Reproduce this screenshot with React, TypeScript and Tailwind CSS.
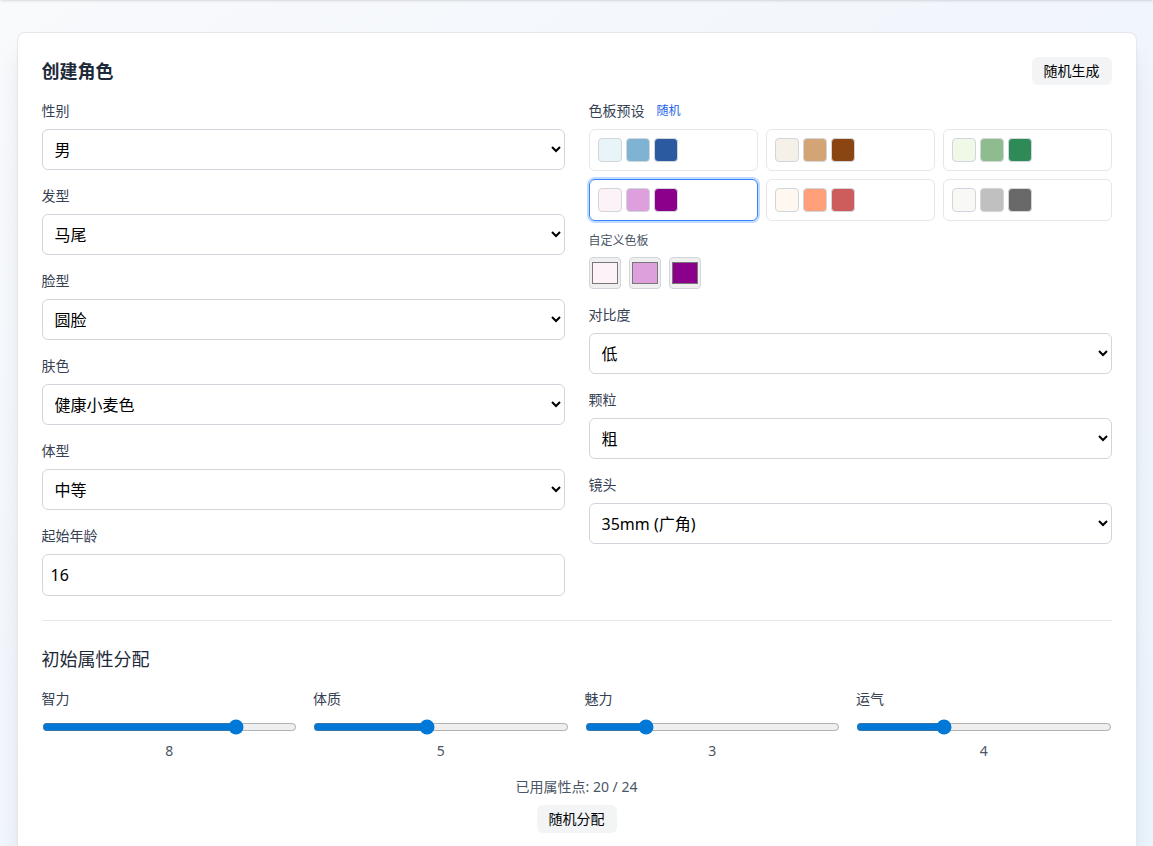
import { useState } from "react";

const presets = [
  ["#e8f4f8", "#7fb3d3", "#2c5aa0"],
  ["#f5f1e8", "#d4a574", "#8b4513"],
  ["#f0f8e8", "#8fbc8f", "#2e8b57"],
  ["#fdf2f8", "#dda0dd", "#8b008b"],
  ["#fff8f0", "#ffa07a", "#cd5c5c"],
  ["#f8f8f5", "#c0c0c0", "#696969"],
];

const looks = [
  { id: "gender", label: "性别", options: ["男", "女"] },
  { id: "hair", label: "发型", options: ["马尾", "短发", "长发"] },
  { id: "face", label: "脸型", options: ["圆脸", "方脸", "瓜子脸"] },
  { id: "skin", label: "肤色", options: ["健康小麦色", "白皙", "深色"] },
  { id: "body", label: "体型", options: ["中等", "纤细", "健壮"] },
];

const camera = [
  { id: "contrast", label: "对比度", options: ["低", "中", "高"] },
  { id: "grain", label: "颗粒", options: ["粗", "中", "细"] },
  { id: "lens", label: "镜头", options: ["35mm (广角)", "50mm (标准)", "85mm (人像)"] },
];

const attributes = [
  { id: "int", label: "智力" },
  { id: "con", label: "体质" },
  { id: "cha", label: "魅力" },
  { id: "luck", label: "运气" },
];

const TOTAL = 24;

function SelectField({ id, label, options }: { id: string; label: string; options: string[] }) {
  return (
    <div>
      <label htmlFor={id} className="mb-2 block text-sm text-gray-700">
        {label}
      </label>
      <select id={id} className="block h-[41px] w-full rounded-md border border-gray-300 bg-white p-2 text-base text-black">
        {options.map((option) => (
          <option key={option}>{option}</option>
        ))}
      </select>
    </div>
  );
}

export default function App() {
  const [selected, setSelected] = useState(3);
  const [colors, setColors] = useState(presets[3]);
  const [points, setPoints] = useState([8, 5, 3, 4]);

  const pickPreset = (index: number) => {
    setSelected(index);
    setColors(presets[index]);
  };

  // every attribute starts at 1, the rest is handed out one point at a time
  const randomPoints = () => {
    const next = [1, 1, 1, 1];
    let left = TOTAL - 4;
    while (left > 0) {
      const i = Math.floor(Math.random() * 4);
      if (next[i] < 10) {
        next[i]++;
        left--;
      }
    }
    setPoints(next);
  };

  const randomPreset = () => pickPreset(Math.floor(Math.random() * presets.length));

  const used = points.reduce((sum, n) => sum + n, 0);

  return (
    <div className="flex min-h-screen flex-col overflow-hidden bg-linear-to-br from-[#f8fafc] via-[#f1f5fc] to-[#ebf5fd] font-['Noto_Sans','Noto_Sans_CJK_SC',sans-serif]">
      <header className="-mt-4 h-4 shadow-sm" />
      <main className="mx-auto flex w-full max-w-6xl grow flex-col px-4 pt-8">
        <section className="grow rounded-t-lg border border-b-0 border-gray-200 bg-white px-6 pt-6 pb-3 shadow-xl">
          <div className="mb-4 flex items-center justify-between">
            <h2 className="text-lg font-bold text-gray-800">创建角色</h2>
            <button
              type="button"
              onClick={() => {
                randomPreset();
                randomPoints();
              }}
              className="rounded-md bg-gray-100 px-3 py-1 text-sm text-black hover:bg-gray-200"
            >
              随机生成
            </button>
          </div>

          <div className="grid grid-cols-2 gap-6">
            {/* Appearance */}
            <div className="space-y-4">
              {looks.map((field) => (
                <SelectField key={field.id} {...field} />
              ))}
              <div>
                <label htmlFor="age" className="mb-2 block text-sm text-gray-700">
                  起始年龄
                </label>
                <input
                  id="age"
                  type="number"
                  defaultValue={16}
                  className="block h-[42px] w-full rounded-md border border-gray-300 p-2 text-base text-black"
                />
              </div>
            </div>

            {/* Palette and camera */}
            <div className="space-y-4">
              <div>
                <div className="mb-2 flex items-center gap-3">
                  <span className="text-sm text-gray-700">色板预设</span>
                  <button type="button" onClick={randomPreset} className="text-xs text-[#2563eb]">
                    随机
                  </button>
                </div>
                <div className="grid grid-cols-3 gap-2">
                  {presets.map((preset, i) => (
                    <button
                      key={preset[0]}
                      type="button"
                      aria-label={preset.join(" ")}
                      onClick={() => pickPreset(i)}
                      className={
                        i === selected
                          ? "flex gap-1 rounded-md border border-[#3b82f6] p-2 ring-2 ring-[#bfdbfe]"
                          : "flex gap-1 rounded-md border border-gray-200 p-2"
                      }
                    >
                      {preset.map((color) => (
                        <span key={color} className="size-6 rounded-sm border border-gray-300" style={{ backgroundColor: color }} />
                      ))}
                    </button>
                  ))}
                </div>
                <div className="mt-3 mb-2 text-xs text-gray-600">自定义色板</div>
                <div className="flex gap-2">
                  {colors.map((color, i) => (
                    <input
                      key={i}
                      type="color"
                      aria-label={`自定义色板 ${i + 1}`}
                      value={color}
                      onChange={(e) => setColors(colors.map((c, j) => (j === i ? e.target.value : c)))}
                      className="size-8 rounded-sm border border-gray-300 bg-[#efefef]"
                    />
                  ))}
                </div>
              </div>
              {camera.map((field) => (
                <SelectField key={field.id} {...field} />
              ))}
            </div>
          </div>

          {/* Attribute points */}
          <div className="mt-6 border-t border-gray-200 pt-6">
            <h3 className="mb-4 text-lg text-gray-800">初始属性分配</h3>
            <div className="grid grid-cols-4 gap-4">
              {attributes.map((attr, i) => (
                <div key={attr.id}>
                  <label htmlFor={attr.id} className="mb-2 block text-sm text-gray-700">
                    {attr.label}
                  </label>
                  <div className="flex py-0.5">
                    <input
                      id={attr.id}
                      type="range"
                      min={1}
                      max={10}
                      value={points[i]}
                      onChange={(e) => setPoints(points.map((p, j) => (j === i ? Number(e.target.value) : p)))}
                      className="w-full accent-[#0078d7]"
                    />
                  </div>
                  <div className="mt-1 text-center text-sm text-gray-600">{points[i]}</div>
                </div>
              ))}
            </div>
            <div className="mt-4 flex flex-col items-center gap-2">
              <p className="text-sm text-gray-600">
                已用属性点: {used} / {TOTAL}
              </p>
              <button
                type="button"
                onClick={randomPoints}
                className="rounded-md bg-gray-100 px-3 py-1 text-sm text-black hover:bg-gray-200"
              >
                随机分配
              </button>
            </div>
          </div>
        </section>
      </main>
    </div>
  );
}
